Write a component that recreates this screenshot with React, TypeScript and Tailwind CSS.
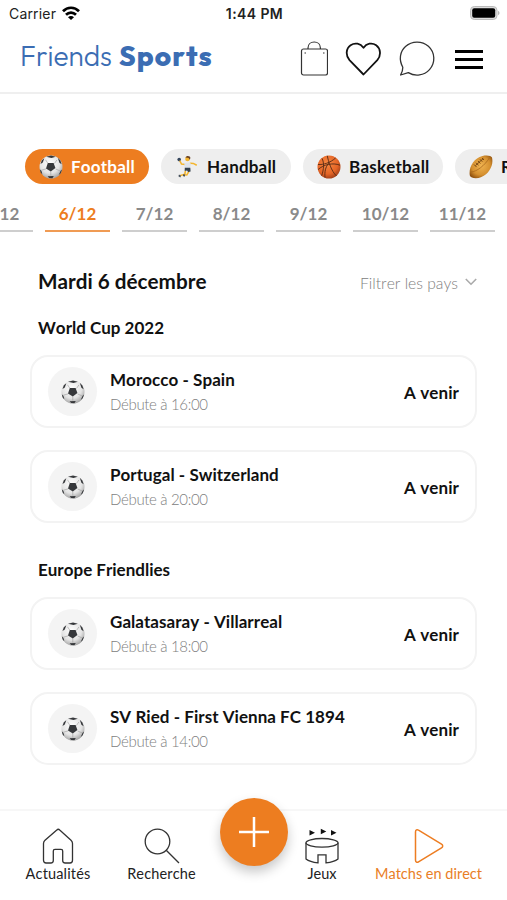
import { useState } from "react";
import type { ReactNode } from "react";

type Sport = { name: string; icon: ReactNode; width: string };
type Match = { teams: string; time: string };

function SoccerBall({ className }: { className: string }) {
  return (
    <svg viewBox="0 0 24 24" className={className}>
      <defs>
        <radialGradient id="soccer" cx="45%" cy="35%" r="65%">
          <stop offset="0" stopColor="#ffffff" />
          <stop offset="0.65" stopColor="#e4e4e4" />
          <stop offset="1" stopColor="#a6a6a6" />
        </radialGradient>
      </defs>
      <circle cx="12" cy="12" r="11.5" fill="url(#soccer)" />
      <g stroke="#9b9b9b" strokeWidth="0.6" fill="none">
        <path d="M9 8.5 6.5 4.8M15.5 8.5 17.8 5M16.7 14l4.2 1.8M11.8 16.5v4M7.3 13.8l-4.8 1.4" />
      </g>
      <g fill="#36383b">
        <path d="M8.8 8.1h5.8l1.8 4.9-4.6 3.6-4.8-3z" />
        <path d="M7 1.8 12 .6l4.8 1.2-4.3 1.3zM2.8 5.3 5.3 3.2 3.8 7.5 1.5 9zM18.8 2.8l2.6 2.7 1.2 3.7-2.2-1.5zM.8 14.2l1.7 1.8.9 3.5-1.8-2.1zM21.6 15.8l1.5-1.4-1.4 3.8-2 1.8zM8.6 21.2l6.2-.1-1.4 2.1-3.2-.1z" />
      </g>
    </svg>
  );
}

function HandballPlayer() {
  return (
    <svg viewBox="0 0 24 24" className="size-6">
      <circle cx="4.2" cy="4.6" r="1.8" fill="#34455c" />
      <path d="M5 6.2 6.5 9l3.7.5M15.5 8.2l2.8.2 3 1.6" stroke="#f4b52d" strokeWidth="1.5" fill="none" strokeLinecap="round" />
      <path d="m10.3 16.5-.5 2.7-4.3 1.4M13.8 16.7l-2 3.3-2.6-.2" stroke="#f4b52d" strokeWidth="1.6" fill="none" strokeLinecap="round" />
      <circle cx="12.5" cy="4" r="2.3" fill="#f4b52d" />
      <path d="M10.4 2.6C11 .3 15.6.5 15.4 3.2l-1 1.5-.7-1.8z" fill="#6c4325" />
      <path d="m9.2 8.2 5.6-1 1.2 2-1 4.2H9.9z" fill="#dfe4ea" />
      <path d="M9.8 12.8h5.5l.3 3.7-2.5.6-1-1.6-2.4.5z" fill="#36424d" />
      <path d="m4 19.5 2 1.3-.7 1.8-1.9-1.3zM8.5 18.9l1.7.8-.5 2-1.9-.7z" fill="#46515c" />
    </svg>
  );
}

function Basketball() {
  return (
    <svg viewBox="0 0 24 24" className="size-6">
      <defs>
        <radialGradient id="basket" cx="42%" cy="35%" r="65%">
          <stop offset="0" stopColor="#f88a43" />
          <stop offset="0.7" stopColor="#e56526" />
          <stop offset="1" stopColor="#a9431a" />
        </radialGradient>
      </defs>
      <circle cx="12" cy="12" r="11.5" fill="url(#basket)" />
      <path
        d="M1 9.5c5.5.3 12-1.5 17.7-6.6M10.3.8c1 5.5 4.2 15.5 9 20M5 3.3c2.3 4.3 1.8 11.5-.3 17.3M1 14.6c5.5-5 14.5-7.3 22-4.4M8 22.5c-.5-5.3.3-10.5 3.8-14.3"
        fill="none"
        stroke="#552914"
        strokeWidth="0.9"
      />
    </svg>
  );
}

function RugbyBall() {
  return (
    <svg viewBox="0 0 24 24" className="size-6">
      <defs>
        <radialGradient id="rugby" cx="50%" cy="45%" r="62%">
          <stop offset="0" stopColor="#f0b452" />
          <stop offset="0.65" stopColor="#d5902f" />
          <stop offset="1" stopColor="#92530f" />
        </radialGradient>
      </defs>
      <path d="M.8 20.5C-.5 12.5 4.5 3.2 13.5 1c4.2-1 8.7-.4 9.5 1.6 1.8 7.2-2.6 15.9-10.6 19.5-4.5 2-10.6 1.4-11.6-1.6z" fill="url(#rugby)" />
      <path d="M2 17c5.5-.3 13.5-6.2 18.5-14.2" stroke="#a9681c" strokeWidth="0.8" fill="none" />
      <path d="m6.5 10.5 7.8-7M5 9.5l2.6 2.6M7 7.8l2.5 2.6M9 6l2.4 2.5M11 4.3l2.3 2.4M13 3l2 2" stroke="#70410f" strokeWidth="0.9" fill="none" />
    </svg>
  );
}

const sports: Sport[] = [
  { name: "Football", icon: <SoccerBall className="size-6" />, width: "w-[124px]" },
  { name: "Handball", icon: <HandballPlayer />, width: "w-[130px]" },
  { name: "Basketball", icon: <Basketball />, width: "w-[140px]" },
  { name: "Rugby", icon: <RugbyBall />, width: "w-[110px]" },
];

const days = ["5/12", "6/12", "7/12", "8/12", "9/12", "10/12", "11/12"];

const leagues: { name: string; matches: Match[] }[] = [
  {
    name: "World Cup 2022",
    matches: [
      { teams: "Morocco - Spain", time: "16:00" },
      { teams: "Portugal - Switzerland", time: "20:00" },
    ],
  },
  {
    name: "Europe Friendlies",
    matches: [
      { teams: "Galatasaray - Villarreal", time: "18:00" },
      { teams: "SV Ried - First Vienna FC 1894", time: "14:00" },
    ],
  },
];

function StatusBar() {
  return (
    <div className="grid h-7 grid-cols-3 items-center pb-px pl-[9px] pr-[7px] font-['Inter',sans-serif] text-[14px] text-[#222]">
      <div className="flex items-center gap-1.5">
        <span className="tracking-[0.25px]">Carrier</span>
        <svg viewBox="0 0 18 14" className="h-[14px] w-[18px] -translate-y-px" fill="none" stroke="#000" strokeWidth="2.7">
          <path d="M1 5.2c4.5-4.6 11.5-4.6 16 0M4 8.7c2.9-2.9 7.1-2.9 10 0" />
          <path d="M6 11.2c1.8-1.5 4.2-1.5 6 0L9 14z" fill="#000" stroke="none" />
        </svg>
      </div>
      <span className="text-center text-[14px] font-semibold tracking-[0.4px]">1:44 PM</span>
      <svg viewBox="0 0 30 14" className="h-[14px] w-[30px] -translate-y-px justify-self-end">
        <rect x="0.5" y="0.5" width="26.5" height="13" rx="3.8" fill="#ddd" stroke="#bbb" />
        <rect x="2.2" y="2.2" width="23" height="9.6" rx="2" fill="#000" />
        <path d="M28.2 4.8c1.7.8 1.7 3.6 0 4.4z" fill="#aaa" />
      </svg>
    </div>
  );
}

function Header() {
  return (
    <header className="flex h-[66px] items-start justify-between border-b-2 border-[#efefef] pl-[20px] pr-[24px]">
      <h1 className="mt-[8px] flex gap-[7px] font-['Outfit','Lato',sans-serif] text-[28px] leading-[40px] text-[#3b6db3]">
        <span className="font-light">Friends</span>
        <span className="font-extrabold tracking-[1.1px]">Sports</span>
      </h1>
      <div className="mt-[12px] flex h-[38px] items-center">
        <svg viewBox="0 0 28 36" className="h-9 w-7" fill="none" stroke="#333" strokeWidth="1.2">
          <rect x="1.5" y="8" width="26" height="26" rx="2" />
          <path d="M8 8V7c0-3.7 2.7-6 6.2-6s6.200 2.300 6.200 6v1" />
          <path d="M4.500 12H6M23 12h1.500" />
        </svg>
        <svg viewBox="0 0 36 34" className="ml-[17px] h-[34px] w-9" fill="none" stroke="#111" strokeWidth="1.8" strokeLinejoin="round">
          <path d="M18.5 32.5 4.5 18.2C.3 13.5 1 6.3 5.6 3.2 9.9.3 15.4 1.3 18.5 5.8 21.5 1.3 27 .3 31.2 3.2 35.6 6.3 36.4 13.500 32.300 18.200z" />
        </svg>
        <svg viewBox="0 0 36 36" className="ml-[18px] size-9" fill="none" stroke="#333" strokeWidth="1.3" strokeLinejoin="round">
          <path d="M3.800 26.200C-.300 19 .800 10.500 6.500 5.500 13-.300 23-.300 29.400 5.300c6.800 6.200 7.200 16.500 1.100 23.300-5.400 6-14.400 7.200-21.200 3L1.600 34c1.300-2.600 2.400-5 2.200-7.800z" />
        </svg>
        <div className="ml-[20px] flex w-7 flex-col gap-[5px]">
          <span className="h-[3px] bg-black" />
          <span className="h-[3px] bg-black" />
          <span className="h-[3px] bg-black" />
        </div>
      </div>
    </header>
  );
}

function MatchCard({ teams, time }: Match) {
  return (
    <article className="flex h-[73px] items-center rounded-[18px] border-2 border-[#f3f3f3] pl-[16px] pr-[16px]">
      <div className="flex size-[49px] shrink-0 items-center justify-center rounded-full bg-[#f4f4f4]">
        <SoccerBall className="size-6" />
      </div>
      <div className="ml-[13px] flex-1 pt-px">
        <p className="text-[17px] font-bold leading-6 tracking-[0.04px] text-[#111]">{teams}</p>
        <p className="text-[15px] font-light leading-6 tracking-[-0.35px] text-[#808080]">Débute à {time}</p>
      </div>
      <span className="pt-[2px] text-[17px] font-bold tracking-[0.1px] text-[#111]">A venir</span>
    </article>
  );
}

function TabBar() {
  return (
    <nav className="relative mt-auto h-[91px] border-t-2 border-[#f7f7f7] text-[14.5px] leading-5 text-[#222]">
      <div className="grid h-full grid-cols-[116px_91px_94px_42px_164px] pt-[17px] text-center">
        <button className="flex flex-col items-center">
          <svg viewBox="0 0 32 36" className="h-9 w-8" fill="none" stroke="#333" strokeWidth="1.3" strokeLinejoin="round">
            <path d="M1.500 15.500c0-1.300.500-2.300 1.500-3.200L14.800 2c.9-.9 2-.9 2.900 0L29 12.300c1 .9 1.500 1.900 1.500 3.200v16.800c0 1.500-1 2.700-2.500 2.700h-4.800c-1.500 0-2.500-1-2.500-2.500V23c0-1-.7-1.700-1.700-1.700h-6c-1 0-1.700.7-1.700 1.700v9.500c0 1.500-1 2.500-2.500 2.500H4c-1.500 0-2.500-1.200-2.500-2.700z" />
          </svg>
          <span className="whitespace-nowrap tracking-[0.15px]">Actualités</span>
        </button>
        <button className="flex flex-col items-center">
          <svg viewBox="0 0 36 36" className="h-9 w-9" fill="none" stroke="#333" strokeWidth="1.3">
            <circle cx="13.500" cy="13.500" r="12.300" />
            <path d="m22.200 22.200 12.800 12.800" />
          </svg>
          <span className="whitespace-nowrap tracking-[0.15px]">Recherche</span>
        </button>
        <span />
        <button className="flex flex-col items-center">
          <svg viewBox="0 0 34 36" className="h-9 w-[34px]" fill="none" stroke="#333" strokeWidth="1.3">
            <path d="M4.500 2v5.500L10 4.800zM15.800.800v5.500l5.500-2.700zM26 2v5.500l5.500-2.700z" fill="#111" stroke="none" />
            <ellipse cx="17" cy="14.800" rx="16" ry="4.300" />
            <path d="M1 14.800V31c2.500 2 7 3.300 12 3.800v-8h8v8c5-.5 9.500-1.800 12-3.800V14.800" />
          </svg>
          <span>Jeux</span>
        </button>
        <button className="flex flex-col items-center pl-[7px] text-[#e97e25]">
          <svg viewBox="0 0 30 36" className="h-9 w-[30px]" fill="none" stroke="#ed7d22" strokeWidth="1.5" strokeLinejoin="round">
            <path d="M1.500 4c0-2 1.500-2.900 3-1.900l23 14c1.600 1 1.600 2.800 0 3.800l-23 14c-1.500 1-3 .1-3-1.900z" />
          </svg>
          <span className="whitespace-nowrap">Matchs en direct</span>
        </button>
      </div>
      <button className="absolute -top-[13px] left-[220px] flex size-[68px] items-center justify-center rounded-full bg-[#ed7d20] shadow-[0_6px_12px_rgba(0,0,0,0.22)]">
        <svg viewBox="0 0 30 30" className="size-[30px]" stroke="#fff" strokeWidth="2.5">
          <path d="M15 0v30M0 15h30" />
        </svg>
      </button>
    </nav>
  );
}

export default function App() {
  const [sport, setSport] = useState("Football");
  const [day, setDay] = useState("6/12");

  return (
    <div className="flex h-[900px] w-[507px] flex-col overflow-hidden bg-white font-['Lato',sans-serif] [font-kerning:none]">
      <StatusBar />
      <Header />

      <div className="mt-[55px] flex shrink-0 gap-3 pl-[25px]">
        {sports.map((s) => (
          <button
            key={s.name}
            onClick={() => setSport(s.name)}
            className={`flex h-[35px] shrink-0 items-center gap-2 rounded-full pl-[14px] pt-px text-[17px] font-bold tracking-[0.2px] ${s.width} ${
              s.name === sport ? "bg-[#ed7d20] text-white" : "bg-[#eeeeee] text-[#111]"
            }`}
          >
            {s.icon}
            {s.name}
          </button>
        ))}
      </div>

      <div className="-ml-[32px] mt-[14px] flex shrink-0 gap-[12px]">
        {days.map((d) => (
          <button
            key={d}
            onClick={() => setDay(d)}
            className={`flex w-[65px] shrink-0 flex-col text-[17px] font-bold leading-[32px] ${
              d === day ? "text-[#ed7d20]" : "text-[#8a8a8a]"
            }`}
          >
            <span className="h-8 w-full text-center">{d}</span>
            <span className={`h-[2px] w-full ${d === day ? "bg-[#f09b54]" : "bg-[#cecece]"}`} />
          </button>
        ))}
      </div>

      <main className="pl-[30px] pr-[30px]">
        <div className="mt-[34px] flex h-8 items-center justify-between pl-2">
          <h2 className="text-[20.7px] font-bold text-[#111]">Mardi 6 décembre</h2>
          <button className="flex items-center gap-[7px] text-[15.7px] font-light text-[#808080]">
            <span className="pt-[3px]">Filtrer les pays</span>
            <svg viewBox="0 0 12 8" className="h-2 w-3" fill="none" stroke="#aaa" strokeWidth="1.6">
              <path d="m.8 1 5.200 5.200L11.200 1" />
            </svg>
          </button>
        </div>
        {leagues.map((league, i) => (
          <section key={league.name} className={i === 0 ? "mt-[18px]" : "mt-[35px]"}>
            <h3 className="pl-2 text-[17px] font-bold leading-6 text-[#111]">{league.name}</h3>
            <div className="mt-[15px] flex flex-col gap-[22px]">
              {league.matches.map((m) => (
                <MatchCard key={m.teams} {...m} />
              ))}
            </div>
          </section>
        ))}
      </main>

      <TabBar />
    </div>
  );
}
